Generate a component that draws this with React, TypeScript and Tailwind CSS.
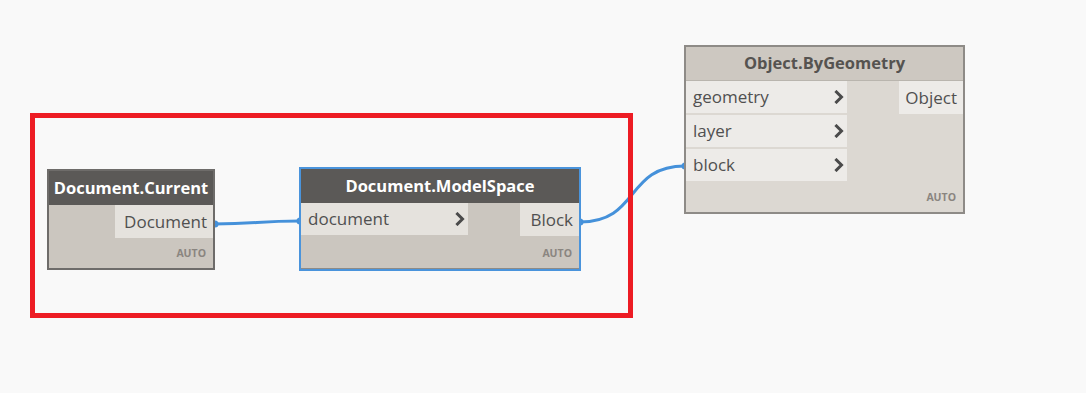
import React from 'react';

type NodeProps = {
  x: number;
  y: number;
  w: number;
  h: number;
  title: string;
  inputs: string[];
  outputs: string[];
  inW?: number;
  outW: number;
  light?: boolean;
  selected?: boolean;
};

function Chevron() {
  return (
    <svg width="10" height="14" viewBox="0 0 10 14" className="shrink-0">
      <path d="M2.5 2 L7.5 7 L2.5 12" fill="none" stroke="#4a4a4a" strokeWidth="3" strokeLinecap="square" />
    </svg>
  );
}

function GraphNode({ x, y, w, h, title, inputs, outputs, inW, outW, light, selected }: NodeProps) {
  const border = selected ? 'border-2 border-[#4a94dc]' : light ? 'border-2 border-[#8e8b87]' : 'border-2 border-[#6e6c6a]';
  const body = light ? 'bg-[#dcd8d2]' : 'bg-[#cbc6bf]';
  const row = light ? 'bg-[#edebe8]' : 'bg-[#e5e2dd]';
  return (
    <div
      className={`absolute flex flex-col ${border} ${body}`}
      style={{ left: x, top: y, width: w, height: h }}
    >
      <div
        className={`h-[34px] shrink-0 flex items-center justify-center text-[16.5px] font-bold ${
          light ? 'bg-[#cdc8c1] text-[#555350] border-b border-[#b9b5ae]' : 'bg-[#5b5957] text-white'
        }`}
      >
        {title}
      </div>
      <div className="flex justify-between">
        <div className="flex flex-col gap-[2px]">
          {inputs.map((name) => (
            <div
              key={name}
              className={`h-[32px] flex items-center justify-between pl-[7px] pr-[3px] text-[17px] text-[#505050] ${row}`}
              style={{ width: inW }}
            >
              <span>{name}</span>
              <Chevron />
            </div>
          ))}
        </div>
        <div className="flex flex-col">
          {outputs.map((name) => (
            <div
              key={name}
              className={`h-[33px] flex items-center justify-end pr-[6px] text-[17px] text-[#505050] ${row}`}
              style={{ width: outW }}
            >
              {name}
            </div>
          ))}
        </div>
      </div>
      <div
        className={`flex-1 flex items-end justify-end pr-[7px] pb-[6px] text-[10.5px] font-bold text-[#8a8580] ${
          selected ? 'border-b border-[#8e8b87]' : ''
        }`}
      >
        AUTO
      </div>
    </div>
  );
}

export default function App() {
  return (
    <div
      className="relative w-[1086px] h-[393px] overflow-hidden bg-[#f9f9f9]"
      style={{ fontFamily: '"Open Sans", "Liberation Sans", sans-serif' }}
    >
      {/* wires */}
      <svg className="absolute inset-0" width="1086" height="393">
        <path d="M214 224 C 257 224 257 221 300 221" fill="none" stroke="#4591da" strokeWidth="3" />
        <path d="M580 222 C 640 222 625 166 685 166" fill="none" stroke="#4591da" strokeWidth="3" />
        <circle cx="215" cy="224" r="3.5" fill="#4591da" />
        <circle cx="300" cy="221" r="3.5" fill="#4591da" />
        <circle cx="580" cy="222" r="3.5" fill="#4591da" />
        <circle cx="685" cy="166" r="3.5" fill="#4591da" />
      </svg>

      <GraphNode
        x={47}
        y={169}
        w={168}
        h={101}
        title="Document.Current"
        inputs={[]}
        outputs={['Document']}
        outW={98}
      />

      <GraphNode
        x={299}
        y={167}
        w={282}
        h={104}
        title="Document.ModelSpace"
        inputs={['document']}
        inW={167}
        outputs={['Block']}
        outW={59}
        selected
      />

      <GraphNode
        x={684}
        y={45}
        w={281}
        h={169}
        title="Object.ByGeometry"
        inputs={['geometry', 'layer', 'block']}
        inW={161}
        outputs={['Object']}
        outW={64}
        light
      />

      {/* selection annotation */}
      <div className="absolute left-[30px] top-[113px] w-[603px] h-[205px] border-[5px] border-[#ed1c24]" />
    </div>
  );
}
